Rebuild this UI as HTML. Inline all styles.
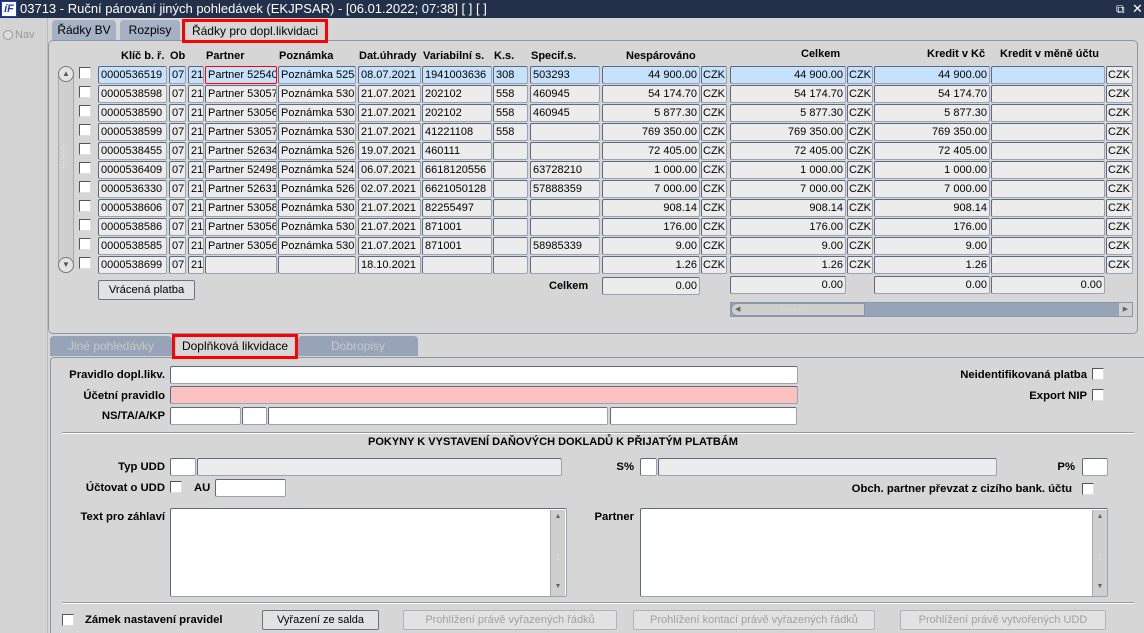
<!DOCTYPE html>
<html><head><meta charset="utf-8">
<style>
*{box-sizing:border-box;margin:0;padding:0}
html,body{width:1144px;height:633px;overflow:hidden}
body{background:#d6d6d6;font-family:"Liberation Sans",Arial,sans-serif;font-size:12px;color:#000;position:relative}
.a{position:absolute}
.t{position:absolute;white-space:nowrap}
.b{font-weight:bold;font-size:11px}
.l{font-size:11.3px!important;text-align:right}
.i{position:absolute;height:18px;background:#ececec;border:1px solid #9aa3b3;border-top-color:#5d6a80;border-left-color:#5d6a80;border-radius:2px;padding:0 2px;line-height:16px;white-space:nowrap;overflow:hidden;font-size:11px}
.w{background:#fff}
.r{text-align:right}
.s .i{background:#c5e1fb}
.cb{position:absolute;width:12px;height:12px;background:#fff;border:1px solid #555;border-right-color:#ddd;border-bottom-color:#ddd}
.row{position:absolute;left:0;top:0;height:18px;width:1144px}
.btn{position:absolute;height:20px;border:1px solid #6b7486;border-radius:2px;background:#e2e2e2;text-align:center;line-height:18px;font-size:11px}
.dis{color:#a0a0a0;border-color:#b0b4bc}
.tab{position:absolute;height:20px;background:#a5b1c4;border-radius:4px 4px 0 0;text-align:center;line-height:20px}
</style></head><body>
<div class="a" style="left:0;top:0;width:1144px;height:18px;background:#23304a;color:#fff;font-size:13px;line-height:18px">
 <div class="a" style="left:1px;top:1px;width:16px;height:16px;background:#fff;border:1px solid #1a3cc0;color:#1a3cc0;font-weight:bold;font-style:italic;font-size:11px;line-height:14px;text-align:center">íF</div>
 <span class="t" style="left:20px">03713 - Ruční párování jiných pohledávek (EKJPSAR) - [06.01.2022; 07:38]  [ ]  [ ]</span>
 <span class="t" style="left:1116px;font-size:12px">⧉</span><span class="t" style="left:1132px">✕</span>
</div>
<div class="a" style="left:0;top:18px;width:48px;height:615px;background:#d3d3d3;border-right:1px solid #b8b8b8"></div>
<div class="a" style="left:3px;top:30px;width:10px;height:10px;border-radius:50%;background:#ddd;border:1px solid #999"></div>
<span class="t" style="left:15px;top:29px;color:#999;font-size:11px">Nav</span>

<div class="tab" style="left:52px;top:20px;width:64px">Řádky BV</div>
<div class="tab" style="left:120px;top:20px;width:60px">Rozpisy</div>
<div class="tab" style="left:182px;top:19px;width:146px;height:24px;background:#d6d6d6;border:3px solid #f00;border-radius:0;line-height:18px;z-index:3">Řádky pro dopl.likvidaci</div>
<div class="a" style="left:48px;top:40px;width:1090px;height:294px;border:1px solid #8995aa;border-radius:5px;background:#d6d6d6"></div>

<span class="t b" style="left:121px;top:50px">Klíč b. ř.</span>
<span class="t b" style="left:170px;top:50px">Ob</span>
<span class="t b" style="left:206px;top:50px">Partner</span>
<span class="t b" style="left:279px;top:50px">Poznámka</span>
<span class="t b" style="left:359px;top:50px">Dat.úhrady</span>
<span class="t b" style="left:423px;top:50px">Variabilní s.</span>
<span class="t b" style="left:494px;top:50px">K.s.</span>
<span class="t b" style="left:531px;top:50px">Specif.s.</span>
<span class="t b" style="left:626px;top:50px">Nespárováno</span>
<span class="t b" style="left:801px;top:48px">Celkem</span>
<span class="t b" style="left:927px;top:48px">Kredit v Kč</span>
<span class="t b" style="left:1000px;top:48px">Kredit v měně účtu</span>

<div class="a" style="left:58px;top:66px;width:16px;height:207px;background:#cfcfcf;border:1px solid #aaa;border-radius:8px"></div>
<div class="a" style="left:58px;top:66px;width:16px;height:16px;border-radius:50%;border:1px solid #777;background:#e4e4e4;font-size:8px;text-align:center;line-height:14px;color:#555">▲</div>
<div class="a" style="left:58px;top:257px;width:16px;height:16px;border-radius:50%;border:1px solid #777;background:#e4e4e4;font-size:8px;text-align:center;line-height:14px;color:#555">▼</div>
<div class="a" style="left:60px;top:145px;width:10px;height:40px;color:#fff;font-size:8px;line-height:6px">·:<br>·:<br>·:<br>·:</div>

<div class="row s" style="top:66px"><div class="cb" style="left:79px;top:1px"></div><div class="i" style="left:98px;width:69px">0000536519</div><div class="i" style="left:169px;width:17px">07</div><div class="i" style="left:188px;width:16px">21</div><div class="i" style="left:205px;width:72px;border:1px solid #f00">Partner 52540</div><div class="i" style="left:278px;width:78px">Poznámka 5254</div><div class="i" style="left:358px;width:63px">08.07.2021</div><div class="i" style="left:422px;width:70px">1941003636</div><div class="i" style="left:493px;width:35px">308</div><div class="i" style="left:530px;width:70px">503293</div><div class="i r" style="left:602px;width:98px">44 900.00</div><div class="i" style="left:701px;width:26px;padding:0 1px">CZK</div><div class="i r" style="left:730px;width:116px">44 900.00</div><div class="i" style="left:847px;width:26px;padding:0 1px">CZK</div><div class="i r" style="left:874px;width:116px">44 900.00</div><div class="i" style="left:991px;width:114px"></div><div class="i" style="left:1106px;width:27px;padding:0 1px;background:#ececec">CZK</div></div>

<div class="row" style="top:85px"><div class="cb" style="left:79px;top:1px"></div><div class="i" style="left:98px;width:69px">0000538598</div><div class="i" style="left:169px;width:17px">07</div><div class="i" style="left:188px;width:16px">21</div><div class="i" style="left:205px;width:72px">Partner 53057</div><div class="i" style="left:278px;width:78px">Poznámka 5305</div><div class="i" style="left:358px;width:63px">21.07.2021</div><div class="i" style="left:422px;width:70px">202102</div><div class="i" style="left:493px;width:35px">558</div><div class="i" style="left:530px;width:70px">460945</div><div class="i r" style="left:602px;width:98px">54 174.70</div><div class="i" style="left:701px;width:26px;padding:0 1px">CZK</div><div class="i r" style="left:730px;width:116px">54 174.70</div><div class="i" style="left:847px;width:26px;padding:0 1px">CZK</div><div class="i r" style="left:874px;width:116px">54 174.70</div><div class="i" style="left:991px;width:114px"></div><div class="i" style="left:1106px;width:27px;padding:0 1px">CZK</div></div>

<div class="row" style="top:104px"><div class="cb" style="left:79px;top:1px"></div><div class="i" style="left:98px;width:69px">0000538590</div><div class="i" style="left:169px;width:17px">07</div><div class="i" style="left:188px;width:16px">21</div><div class="i" style="left:205px;width:72px">Partner 53056</div><div class="i" style="left:278px;width:78px">Poznámka 5305</div><div class="i" style="left:358px;width:63px">21.07.2021</div><div class="i" style="left:422px;width:70px">202102</div><div class="i" style="left:493px;width:35px">558</div><div class="i" style="left:530px;width:70px">460945</div><div class="i r" style="left:602px;width:98px">5 877.30</div><div class="i" style="left:701px;width:26px;padding:0 1px">CZK</div><div class="i r" style="left:730px;width:116px">5 877.30</div><div class="i" style="left:847px;width:26px;padding:0 1px">CZK</div><div class="i r" style="left:874px;width:116px">5 877.30</div><div class="i" style="left:991px;width:114px"></div><div class="i" style="left:1106px;width:27px;padding:0 1px">CZK</div></div>

<div class="row" style="top:123px"><div class="cb" style="left:79px;top:1px"></div><div class="i" style="left:98px;width:69px">0000538599</div><div class="i" style="left:169px;width:17px">07</div><div class="i" style="left:188px;width:16px">21</div><div class="i" style="left:205px;width:72px">Partner 53057</div><div class="i" style="left:278px;width:78px">Poznámka 5305</div><div class="i" style="left:358px;width:63px">21.07.2021</div><div class="i" style="left:422px;width:70px">41221108</div><div class="i" style="left:493px;width:35px">558</div><div class="i" style="left:530px;width:70px"></div><div class="i r" style="left:602px;width:98px">769 350.00</div><div class="i" style="left:701px;width:26px;padding:0 1px">CZK</div><div class="i r" style="left:730px;width:116px">769 350.00</div><div class="i" style="left:847px;width:26px;padding:0 1px">CZK</div><div class="i r" style="left:874px;width:116px">769 350.00</div><div class="i" style="left:991px;width:114px"></div><div class="i" style="left:1106px;width:27px;padding:0 1px">CZK</div></div>

<div class="row" style="top:142px"><div class="cb" style="left:79px;top:1px"></div><div class="i" style="left:98px;width:69px">0000538455</div><div class="i" style="left:169px;width:17px">07</div><div class="i" style="left:188px;width:16px">21</div><div class="i" style="left:205px;width:72px">Partner 52634</div><div class="i" style="left:278px;width:78px">Poznámka 5263</div><div class="i" style="left:358px;width:63px">19.07.2021</div><div class="i" style="left:422px;width:70px">460111</div><div class="i" style="left:493px;width:35px"></div><div class="i" style="left:530px;width:70px"></div><div class="i r" style="left:602px;width:98px">72 405.00</div><div class="i" style="left:701px;width:26px;padding:0 1px">CZK</div><div class="i r" style="left:730px;width:116px">72 405.00</div><div class="i" style="left:847px;width:26px;padding:0 1px">CZK</div><div class="i r" style="left:874px;width:116px">72 405.00</div><div class="i" style="left:991px;width:114px"></div><div class="i" style="left:1106px;width:27px;padding:0 1px">CZK</div></div>

<div class="row" style="top:161px"><div class="cb" style="left:79px;top:1px"></div><div class="i" style="left:98px;width:69px">0000536409</div><div class="i" style="left:169px;width:17px">07</div><div class="i" style="left:188px;width:16px">21</div><div class="i" style="left:205px;width:72px">Partner 52498</div><div class="i" style="left:278px;width:78px">Poznámka 5249</div><div class="i" style="left:358px;width:63px">06.07.2021</div><div class="i" style="left:422px;width:70px">6618120556</div><div class="i" style="left:493px;width:35px"></div><div class="i" style="left:530px;width:70px">63728210</div><div class="i r" style="left:602px;width:98px">1 000.00</div><div class="i" style="left:701px;width:26px;padding:0 1px">CZK</div><div class="i r" style="left:730px;width:116px">1 000.00</div><div class="i" style="left:847px;width:26px;padding:0 1px">CZK</div><div class="i r" style="left:874px;width:116px">1 000.00</div><div class="i" style="left:991px;width:114px"></div><div class="i" style="left:1106px;width:27px;padding:0 1px">CZK</div></div>

<div class="row" style="top:180px"><div class="cb" style="left:79px;top:1px"></div><div class="i" style="left:98px;width:69px">0000536330</div><div class="i" style="left:169px;width:17px">07</div><div class="i" style="left:188px;width:16px">21</div><div class="i" style="left:205px;width:72px">Partner 52631</div><div class="i" style="left:278px;width:78px">Poznámka 5263</div><div class="i" style="left:358px;width:63px">02.07.2021</div><div class="i" style="left:422px;width:70px">6621050128</div><div class="i" style="left:493px;width:35px"></div><div class="i" style="left:530px;width:70px">57888359</div><div class="i r" style="left:602px;width:98px">7 000.00</div><div class="i" style="left:701px;width:26px;padding:0 1px">CZK</div><div class="i r" style="left:730px;width:116px">7 000.00</div><div class="i" style="left:847px;width:26px;padding:0 1px">CZK</div><div class="i r" style="left:874px;width:116px">7 000.00</div><div class="i" style="left:991px;width:114px"></div><div class="i" style="left:1106px;width:27px;padding:0 1px">CZK</div></div>

<div class="row" style="top:199px"><div class="cb" style="left:79px;top:1px"></div><div class="i" style="left:98px;width:69px">0000538606</div><div class="i" style="left:169px;width:17px">07</div><div class="i" style="left:188px;width:16px">21</div><div class="i" style="left:205px;width:72px">Partner 53058</div><div class="i" style="left:278px;width:78px">Poznámka 5305</div><div class="i" style="left:358px;width:63px">21.07.2021</div><div class="i" style="left:422px;width:70px">82255497</div><div class="i" style="left:493px;width:35px"></div><div class="i" style="left:530px;width:70px"></div><div class="i r" style="left:602px;width:98px">908.14</div><div class="i" style="left:701px;width:26px;padding:0 1px">CZK</div><div class="i r" style="left:730px;width:116px">908.14</div><div class="i" style="left:847px;width:26px;padding:0 1px">CZK</div><div class="i r" style="left:874px;width:116px">908.14</div><div class="i" style="left:991px;width:114px"></div><div class="i" style="left:1106px;width:27px;padding:0 1px">CZK</div></div>

<div class="row" style="top:218px"><div class="cb" style="left:79px;top:1px"></div><div class="i" style="left:98px;width:69px">0000538586</div><div class="i" style="left:169px;width:17px">07</div><div class="i" style="left:188px;width:16px">21</div><div class="i" style="left:205px;width:72px">Partner 53056</div><div class="i" style="left:278px;width:78px">Poznámka 5305</div><div class="i" style="left:358px;width:63px">21.07.2021</div><div class="i" style="left:422px;width:70px">871001</div><div class="i" style="left:493px;width:35px"></div><div class="i" style="left:530px;width:70px"></div><div class="i r" style="left:602px;width:98px">176.00</div><div class="i" style="left:701px;width:26px;padding:0 1px">CZK</div><div class="i r" style="left:730px;width:116px">176.00</div><div class="i" style="left:847px;width:26px;padding:0 1px">CZK</div><div class="i r" style="left:874px;width:116px">176.00</div><div class="i" style="left:991px;width:114px"></div><div class="i" style="left:1106px;width:27px;padding:0 1px">CZK</div></div>

<div class="row" style="top:237px"><div class="cb" style="left:79px;top:1px"></div><div class="i" style="left:98px;width:69px">0000538585</div><div class="i" style="left:169px;width:17px">07</div><div class="i" style="left:188px;width:16px">21</div><div class="i" style="left:205px;width:72px">Partner 53056</div><div class="i" style="left:278px;width:78px">Poznámka 5305</div><div class="i" style="left:358px;width:63px">21.07.2021</div><div class="i" style="left:422px;width:70px">871001</div><div class="i" style="left:493px;width:35px"></div><div class="i" style="left:530px;width:70px">58985339</div><div class="i r" style="left:602px;width:98px">9.00</div><div class="i" style="left:701px;width:26px;padding:0 1px">CZK</div><div class="i r" style="left:730px;width:116px">9.00</div><div class="i" style="left:847px;width:26px;padding:0 1px">CZK</div><div class="i r" style="left:874px;width:116px">9.00</div><div class="i" style="left:991px;width:114px"></div><div class="i" style="left:1106px;width:27px;padding:0 1px">CZK</div></div>

<div class="row" style="top:256px"><div class="cb" style="left:79px;top:1px"></div><div class="i" style="left:98px;width:69px">0000538699</div><div class="i" style="left:169px;width:17px">07</div><div class="i" style="left:188px;width:16px">21</div><div class="i" style="left:205px;width:72px"></div><div class="i" style="left:278px;width:78px"></div><div class="i" style="left:358px;width:63px">18.10.2021</div><div class="i" style="left:422px;width:70px"></div><div class="i" style="left:493px;width:35px"></div><div class="i" style="left:530px;width:70px"></div><div class="i r" style="left:602px;width:98px">1.26</div><div class="i" style="left:701px;width:26px;padding:0 1px">CZK</div><div class="i r" style="left:730px;width:116px">1.26</div><div class="i" style="left:847px;width:26px;padding:0 1px">CZK</div><div class="i r" style="left:874px;width:116px">1.26</div><div class="i" style="left:991px;width:114px"></div><div class="i" style="left:1106px;width:27px;padding:0 1px">CZK</div></div>

<div class="btn" style="left:98px;top:280px;width:97px;font-size:11.3px">Vrácená platba</div>
<span class="t b" style="left:549px;top:280px">Celkem</span>
<div class="i r" style="left:602px;top:277px;width:98px">0.00</div>
<div class="i r" style="left:730px;top:276px;width:116px">0.00</div>
<div class="i r" style="left:874px;top:276px;width:116px">0.00</div>
<div class="i r" style="left:991px;top:276px;width:114px">0.00</div>
<div class="a" style="left:730px;top:302px;width:403px;height:15px;background:#97a3b6;border:1px solid #8a95a8"></div>
<div class="a" style="left:731px;top:303px;width:134px;height:13px;background:#cfcfcf;border:1px solid #8a95a8;border-radius:6px 0 0 6px;font-size:7px;color:#666;padding-left:3px;line-height:11px">◀<span style="color:#fff;margin-left:40px">· · · · · ·</span></div>
<div class="a" style="left:1119px;top:303px;width:13px;height:13px;background:#cfcfcf;font-size:7px;color:#666;line-height:13px;text-align:center">▶</div>

<div class="tab" style="left:50px;top:336px;width:122px;background:#97a3b6;color:#c8c8c8">Jiné pohledávky</div>
<div class="tab" style="left:172px;top:334px;width:126px;height:25px;background:#d6d6d6;border:3px solid #f00;border-radius:0;line-height:19px;z-index:3">Doplňková likvidace</div>
<div class="tab" style="left:298px;top:336px;width:120px;background:#97a3b6;color:#c8c8c8">Dobropisy</div>
<div class="a" style="left:50px;top:357px;width:1100px;height:276px;border:1px solid #8a95a8;border-bottom:none;border-radius:4px 0 0 0;background:#d6d6d6"></div>

<span class="t b l" style="left:40px;width:125px;top:369px">Pravidlo dopl.likv.</span>
<div class="i w" style="left:170px;top:366px;width:628px"></div>
<span class="t b l" style="left:40px;width:125px;top:390px">Účetní pravidlo</span>
<div class="i" style="left:170px;top:386px;width:628px;background:#fbc0c0"></div>
<span class="t b l" style="left:40px;width:125px;top:410px">NS/TA/A/KP</span>
<div class="i w" style="left:170px;top:407px;width:71px"></div>
<div class="i w" style="left:242px;top:407px;width:25px"></div>
<div class="i w" style="left:268px;top:407px;width:340px"></div>
<div class="i w" style="left:610px;top:407px;width:187px"></div>
<span class="t b l" style="left:887px;width:200px;top:369px">Neidentifikovaná platba</span><div class="cb" style="left:1092px;top:368px"></div>
<span class="t b l" style="left:987px;width:100px;top:390px">Export NIP</span><div class="cb" style="left:1092px;top:389px"></div>
<div class="a" style="left:62px;top:432px;width:1072px;height:2px;border-top:1px solid #999;border-bottom:1px solid #fff"></div>
<span class="t b" style="left:368px;top:436px">POKYNY K VYSTAVENÍ DAŇOVÝCH DOKLADŮ K PŘIJATÝM PLATBÁM</span>

<span class="t b l" style="left:40px;width:125px;top:461px">Typ UDD</span>
<div class="i w" style="left:170px;top:458px;width:26px"></div>
<div class="i" style="left:197px;top:458px;width:365px"></div>
<span class="t b l" style="left:600px;width:34px;top:461px">S%</span>
<div class="i w" style="left:640px;top:458px;width:17px"></div>
<div class="i" style="left:658px;top:458px;width:339px"></div>
<span class="t b l" style="left:1040px;width:35px;top:461px">P%</span>
<div class="i w" style="left:1082px;top:458px;width:26px"></div>
<span class="t b l" style="left:40px;width:125px;top:482px">Účtovat o UDD</span><div class="cb" style="left:170px;top:481px"></div>
<span class="t b" style="left:194px;top:482px;font-size:11.3px">AU</span>
<div class="i w" style="left:215px;top:479px;width:71px"></div>
<span class="t b l" style="left:772px;width:300px;top:483px">Obch. partner převzat z cizího bank. účtu</span><div class="cb" style="left:1082px;top:483px"></div>

<span class="t b l" style="left:40px;width:125px;top:511px">Text pro záhlaví</span>
<div class="i w" style="left:170px;top:508px;width:397px;height:89px"></div>
<div class="a" style="left:550px;top:510px;width:15px;height:86px;background:#cfcfcf;border-left:1px solid #aaa;font-size:7px;color:#666;text-align:center;line-height:14px">▲<br><br><br><span style="color:#fff">⁚</span><br><br>▼</div>
<span class="t b l" style="left:584px;width:50px;top:511px">Partner</span>
<div class="i w" style="left:640px;top:508px;width:468px;height:89px"></div>
<div class="a" style="left:1092px;top:510px;width:15px;height:86px;background:#cfcfcf;border-left:1px solid #aaa;font-size:7px;color:#666;text-align:center;line-height:14px">▲<br><br><br><span style="color:#fff">⁚</span><br><br>▼</div>
<div class="a" style="left:62px;top:602px;width:1072px;height:2px;border-top:1px solid #999;border-bottom:1px solid #fff"></div>

<div class="cb" style="left:62px;top:614px"></div>
<span class="t b" style="left:85px;top:614px;font-size:11.3px">Zámek nastavení pravidel</span>
<div class="btn" style="left:262px;top:610px;width:117px">Vyřazení ze salda</div>
<div class="btn dis" style="left:403px;top:610px;width:214px">Prohlížení právě vyřazených řádků</div>
<div class="btn dis" style="left:633px;top:610px;width:242px">Prohlížení kontací právě vyřazených řádků</div>
<div class="btn dis" style="left:900px;top:610px;width:206px">Prohlížení právě vytvořených UDD</div>
</body></html>
